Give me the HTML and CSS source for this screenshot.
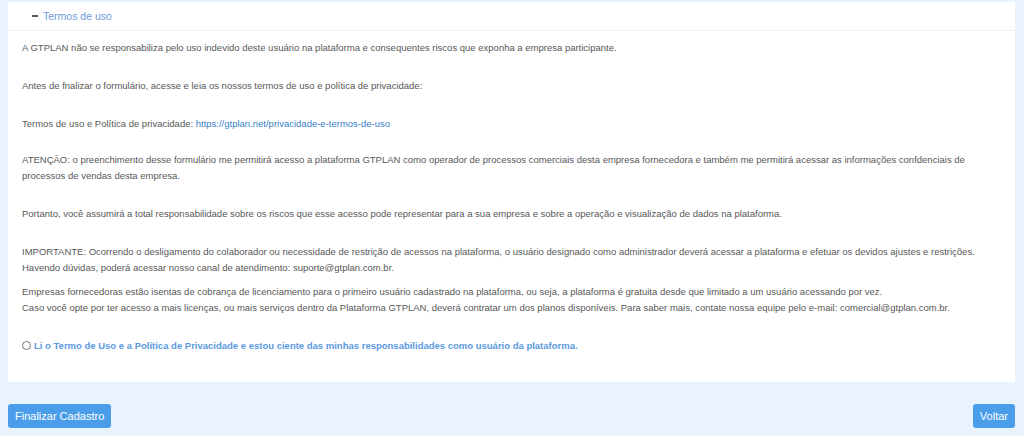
FILE: index.html
```html
<!DOCTYPE html>
<html lang="pt-BR">
<head>
    <meta charset="UTF-8">
    <meta name="viewport" content="width=device-width, initial-scale=1.0">
    <title>Termos de uso</title>
    <link rel="stylesheet" href="styles.css">
</head>
<body>
    <!-- Termos de uso -->
    <div class="card">
        <div class="card-header">
            <span class="toggle"></span>
            <span class="card-title">Termos de uso</span>
        </div>
        <div class="card-body">
            <p class="gap-first">A GTPLAN não se responsabiliza pelo uso indevido deste usuário na plataforma e consequentes riscos que exponha a empresa participante.</p>
            <p>Antes de fnalizar o formulário, acesse e leia os nossos termos de uso e política de privacidade:</p>
            <p class="gap-short">Termos de uso e Política de privacidade: <a href="#">https://gtplan.net/privacidade-e-termos-de-uso</a></p>
            <p>ATENÇÃO: o preenchimento desse formulário me permitirá acesso a plataforma GTPLAN como operador de processos comerciais desta empresa fornecedora e também me permitirá acessar as informações confdenciais de processos de vendas desta empresa.</p>
            <p>Portanto, você assumirá a total responsabilidade sobre os riscos que esse acesso pode representar para a sua empresa e sobre a operação e visualização de dados na plataforma.</p>
            <p class="gap-small">IMPORTANTE: Ocorrendo o desligamento do colaborador ou necessidade de restrição de acessos na plataforma, o usuário designado como administrador deverá acessar a plataforma e efetuar os devidos ajustes e restrições.<br>Havendo dúvidas, poderá acessar nosso canal de atendimento: suporte@gtplan.com.br.</p>
            <p class="gap-last">Empresas fornecedoras estão isentas de cobrança de licenciamento para o primeiro usuário cadastrado na plataforma, ou seja, a plataforma é gratuita desde que limitado a um usuário acessando por vez.<br>Caso você opte por ter acesso a mais licenças, ou mais serviços dentro da Plataforma GTPLAN, deverá contratar um dos planos disponíveis. Para saber mais, contate nossa equipe pelo e-mail: comercial@gtplan.com.br.</p>
            <label class="accept">
                <input type="radio" name="aceite">
                <span>Li o Termo de Uso e a Política de Privacidade e estou ciente das minhas responsabilidades como usuário da plataforma.</span>
            </label>
        </div>
    </div>

    <!-- Actions -->
    <div class="actions">
        <button type="button" class="btn">Finalizar Cadastro</button>
        <button type="button" class="btn">Voltar</button>
    </div>
</body>
</html>
```

FILE: styles.css
```css
body {
    font-family: "Liberation Sans", Arial, sans-serif;
    background-color: #e8f3fe;
    margin: 0;
    padding: 2px 9px 0 8px;
}

/* Card */
.card {
    background: #fff;
    height: 380px;
    box-sizing: border-box;
}

.card-header {
    height: 28px;
    display: flex;
    align-items: center;
    padding-left: 24px;
    border-bottom: 1px solid #f0f4f8;
}

.toggle {
    width: 6px;
    height: 2px;
    background-color: #555;
    margin-right: 5px;
}

.card-title {
    color: #6b9bd9;
    font-size: 10.5px;
}

.card-body {
    padding: 0 14px;
    color: #585858;
    font-size: 9.5px;
}

.card-body p {
    margin: 0 0 22px 0;
    line-height: 16px;
}

.card-body p.gap-first {
    padding-top: 9px;
}

.card-body p.gap-short {
    margin-bottom: 20px;
}

.card-body p.gap-small {
    margin-bottom: 8px;
}

.card-body p.gap-last {
    margin-bottom: 24px;
}

.card-body a {
    color: #3a7fc8;
    text-decoration: none;
}

.accept {
    display: flex;
    align-items: center;
    color: #5b9ae0;
    font-weight: bold;
    font-size: 9.5px;
}

.accept input {
    width: 9px;
    height: 9px;
    margin: 0 3px 0 0;
}

/* Actions */
.actions {
    display: flex;
    justify-content: space-between;
    margin-top: 22px;
}

.btn {
    background-color: #4a9de9;
    color: #fff;
    border: none;
    border-radius: 3px;
    height: 24px;
    padding: 0 7px;
    font-family: "Liberation Sans", Arial, sans-serif;
    font-size: 11px;
    cursor: pointer;
}
```
